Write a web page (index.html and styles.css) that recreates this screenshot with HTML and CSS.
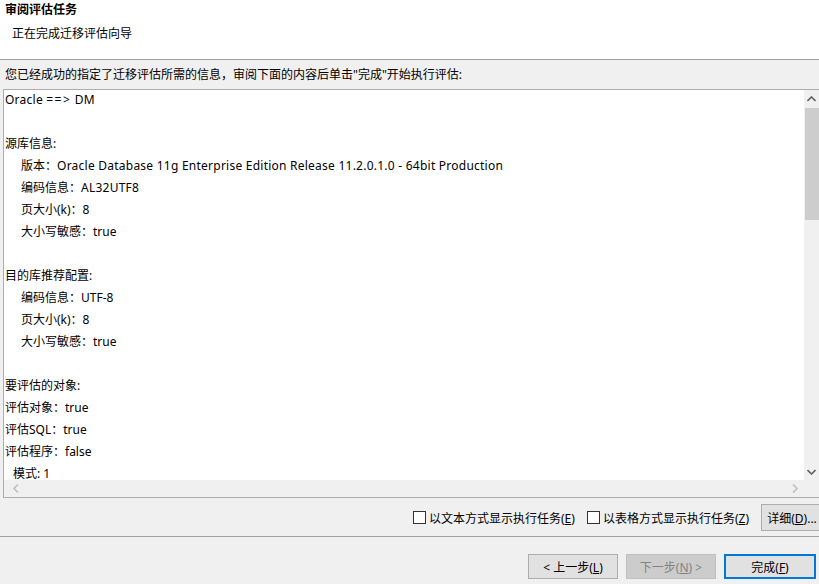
FILE: index.html
```html
<!DOCTYPE html>
<html lang="zh-CN">
<head>
    <meta charset="UTF-8">
    <title>审阅评估任务</title>
    <link rel="stylesheet" href="styles.css">
</head>
<body>
    <div class="header">
        <div class="title">审阅评估任务</div>
        <div class="subtitle">正在完成迁移评估向导</div>
    </div>
    <div class="intro">您已经成功的指定了迁移评估所需的信息，审阅下面的内容后单击"完成"开始执行评估:</div>
    <div class="box">
        <div class="content">
            <div class="line en">Oracle <span class="wide">==&gt;</span> DM</div>
            <div class="line"></div>
            <div class="line">源库信息:</div>
            <div class="line sub"><span>版本：</span><span class="en">Oracle Database 11g Enterprise Edition Release 11.2.0.1.0 - 64bit Production</span></div>
            <div class="line sub">编码信息：<span class="en">AL32UTF8</span></div>
            <div class="line sub">页大小(k)：8</div>
            <div class="line sub">大小写敏感：true</div>
            <div class="line"></div>
            <div class="line">目的库推荐配置:</div>
            <div class="line sub">编码信息：UTF-8</div>
            <div class="line sub">页大小(k)：8</div>
            <div class="line sub">大小写敏感：true</div>
            <div class="line"></div>
            <div class="line">要评估的对象:</div>
            <div class="line">评估对象：true</div>
            <div class="line">评估SQL：true</div>
            <div class="line">评估程序：false</div>
            <div class="line mode">模式: 1</div>
        </div>
        <div class="vscroll">
            <div class="arrow">
                <svg width="9" height="6" viewBox="0 0 9 6"><path d="M0.5 5 L4.5 1 L8.5 5" fill="none" stroke="#606060" stroke-width="1.6"/></svg>
            </div>
            <div class="thumb"></div>
            <div class="track"></div>
            <div class="arrow">
                <svg width="9" height="6" viewBox="0 0 9 6"><path d="M0.5 1 L4.5 5 L8.5 1" fill="none" stroke="#606060" stroke-width="1.6"/></svg>
            </div>
        </div>
        <div class="hscroll">
            <svg width="6" height="9" viewBox="0 0 6 9"><path d="M5 0.5 L1 4.5 L5 8.5" fill="none" stroke="#c0c0c0" stroke-width="1.6"/></svg>
            <svg width="6" height="9" viewBox="0 0 6 9"><path d="M1 0.5 L5 4.5 L1 8.5" fill="none" stroke="#c0c0c0" stroke-width="1.6"/></svg>
        </div>
        <div class="corner"></div>
    </div>
    <div class="options">
        <label class="check"><span class="checkbox"></span><span>以文本方式显示执行任务(<u>E</u>)</span></label>
        <label class="check"><span class="checkbox"></span><span>以表格方式显示执行任务(<u>Z</u>)</span></label>
        <button class="btn detail">详细(<u>D</u>)...</button>
    </div>
    <div class="footer">
        <button class="btn">&lt; 上一步(<u>L</u>)</button>
        <button class="btn" disabled>下一步(<u>N</u>) &gt;</button>
        <button class="btn primary">完成(<u>F</u>)</button>
    </div>
</body>
</html>
```

FILE: styles.css
```css
html, body {
    margin: 0;
    height: 100%;
    overflow: hidden;
}
body {
    background-color: #f0f0f0;
    color: #000;
    font-family: "Noto Sans", "Noto Sans CJK SC", sans-serif;
    font-size: 12px;
}
.header {
    box-sizing: border-box;
    height: 60px;
    padding: 0 5px;
    background-color: #fff;
    border-bottom: 1px solid #a0a0a0;
}
.title {
    line-height: 20px;
    font-weight: bold;
}
.subtitle {
    margin-top: 4px;
    padding-left: 7px;
    line-height: 20px;
}
.intro {
    padding: 5px 5px 0;
    line-height: 20px;
    white-space: nowrap;
}
.box {
    box-sizing: border-box;
    margin: 4px 0 0 3px;
    width: 819px;
    height: 409px;
    border: 1px solid #adadad;
    background-color: #fff;
    display: grid;
    grid-template-columns: 800px 17px;
    grid-template-rows: 390px 17px;
}
.content {
    overflow: hidden;
    padding-left: 1px;
    margin-top: -1px;
}
.line {
    height: 22px;
    line-height: 22px;
    white-space: nowrap;
}
.en {
    letter-spacing: 0.24px;
}
.wide {
    letter-spacing: 1.5px;
}
.sub {
    padding-left: 16px;
}
.mode {
    padding-left: 8px;
}
.vscroll {
    display: flex;
    flex-direction: column;
    background-color: #f0f0f0;
}
.arrow {
    height: 17px;
    display: flex;
    align-items: center;
    justify-content: center;
    padding-right: 2px;
}
.thumb {
    height: 112px;
    margin: 1px 2px 0 1px;
    background-color: #cdcdcd;
}
.track {
    flex: 1;
}
.hscroll {
    display: flex;
    align-items: center;
    justify-content: space-between;
    padding: 0 6px 0 9px;
    background-color: #f0f0f0;
}
.corner {
    background-color: #f0f0f0;
}
.options {
    margin-top: 6px;
    height: 27px;
    display: flex;
    align-items: center;
    justify-content: flex-end;
    gap: 12px;
    margin-right: -4px;
}
.check {
    display: flex;
    align-items: center;
    gap: 3px;
}
.checkbox {
    box-sizing: border-box;
    width: 13px;
    height: 13px;
    border: 1px solid #333;
    background-color: #fff;
}
.btn {
    box-sizing: border-box;
    height: 25px;
    width: 90px;
    padding: 0;
    border: 1px solid #adadad;
    background-color: #e1e1e1;
    font-family: inherit;
    font-size: 12px;
    color: #000;
}
.btn.detail {
    width: 62px;
    height: 27px;
}
.btn:disabled {
    background-color: #cccccc;
    border-color: #bfbfbf;
    color: #838383;
}
.btn.primary {
    border: 2px solid #0078d7;
    width: 92px;
}
.footer {
    margin-top: 5px;
    border-top: 1px solid #a0a0a0;
    padding: 17px 3px 0 0;
    display: flex;
    justify-content: flex-end;
    gap: 8px;
}
```
